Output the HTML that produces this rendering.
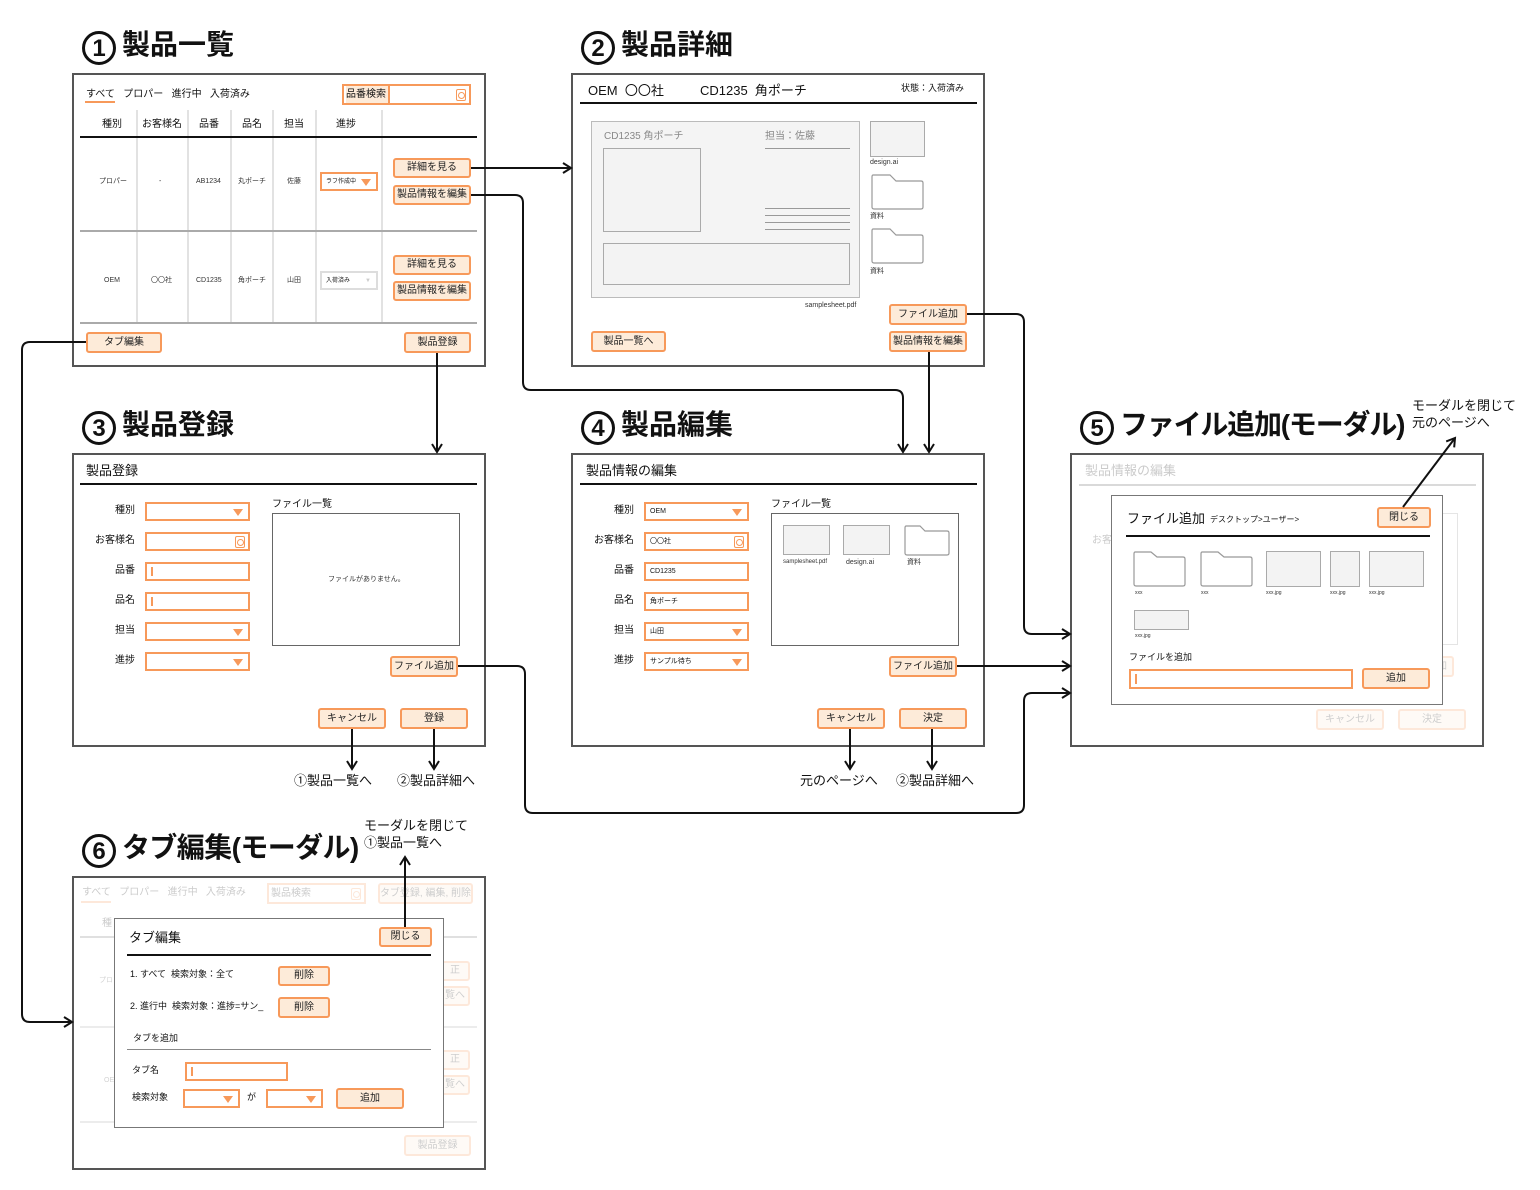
<!DOCTYPE html>
<html><head><meta charset="utf-8">
<style>
*{margin:0;padding:0;box-sizing:border-box}
body{width:1540px;height:1190px;background:#fff;position:relative;overflow:hidden;font-family:"Liberation Sans","Noto Sans CJK JP",sans-serif;color:#111}
.a{position:absolute}
.t{position:absolute;line-height:1;white-space:nowrap}
.f{position:absolute;border:2px solid #555;background:#fff}
.b{position:absolute;border:2px solid #f7995a;background:#fdebd9;border-radius:3px;display:flex;align-items:center;justify-content:center;font-size:10px;line-height:1;white-space:nowrap;color:#222}
.i{position:absolute;border:2px solid #f7995a;background:#fff;font-size:7px;line-height:1;display:flex;align-items:center;padding-left:4px}
.dd::after{content:"";position:absolute;right:5px;top:50%;margin-top:-3px;border-left:5px solid transparent;border-right:5px solid transparent;border-top:7px solid #f7995a}
.cur::before{content:"";position:absolute;left:4px;top:3px;width:2px;bottom:3px;background:#f7995a}
.hl{position:absolute;height:2px;background:#111}
.gl{position:absolute;height:2px;background:#aaa}
.vl{position:absolute;width:2px;background:#e2e2e2}
.h1{position:absolute;font-weight:bold;font-size:28px;line-height:1;white-space:nowrap}
.c{display:inline-block;width:34px;height:34px;border:3px solid #111;border-radius:50%;text-align:center;font-size:24px;line-height:29px;vertical-align:top;margin-right:6px}
.th{position:absolute;background:#f3f3f3;border:1.5px solid #aaa}
.sm{position:absolute;font-size:7px;line-height:1;white-space:nowrap;color:#333}
.lb{position:absolute;font-size:10px;line-height:1;white-space:nowrap;text-align:right;width:60px}
.fade{opacity:.22}
.mg{position:absolute;right:3px;top:50%;margin-top:-6px;width:10px;height:12px;border:1.5px solid #f7995a;border-radius:2px}
.mg::after{content:"";position:absolute;left:1px;top:2px;width:5px;height:5px;border:1.5px solid #f7995a;border-radius:50%}
</style></head><body>

<!-- Titles -->
<div class="h1" style="left:82px;top:31px"><span class="c">1</span>製品一覧</div>
<div class="h1" style="left:581px;top:31px"><span class="c">2</span>製品詳細</div>
<div class="h1" style="left:82px;top:411px"><span class="c">3</span>製品登録</div>
<div class="h1" style="left:581px;top:411px"><span class="c">4</span>製品編集</div>
<div class="h1" style="left:1080px;top:411px;letter-spacing:-1.2px"><span class="c" style="letter-spacing:0">5</span>ファイル追加(モーダル)</div>
<div class="h1" style="left:82px;top:834px;letter-spacing:-0.6px"><span class="c" style="letter-spacing:0">6</span>タブ編集(モーダル)</div>
<div class="t" style="left:1412px;top:397px;font-size:13px;line-height:17px">モーダルを閉じて<br>元のページへ</div>
<div class="t" style="left:364px;top:817px;font-size:13px;line-height:17px">モーダルを閉じて<br>①製品一覧へ</div>
<div class="t" style="left:294px;top:774px;font-size:13px">①製品一覧へ</div>
<div class="t" style="left:397px;top:774px;font-size:13px">②製品詳細へ</div>
<div class="t" style="left:800px;top:774px;font-size:13px">元のページへ</div>
<div class="t" style="left:896px;top:774px;font-size:13px">②製品詳細へ</div>

<!-- Screen 1 -->
<div class="f" style="left:72px;top:73px;width:414px;height:294px"></div>
<div class="t" style="left:86px;top:90px;font-size:10px">すべて&nbsp;&nbsp;&nbsp;プロパー&nbsp;&nbsp;&nbsp;進行中&nbsp;&nbsp;&nbsp;入荷済み</div>
<div class="a" style="left:85px;top:101px;width:30px;height:2px;background:#f7995a"></div>
<div class="i" style="left:342px;top:84px;width:129px;height:21px;padding-left:2px;font-size:10px"><span style="border-right:2px solid #f7995a;padding-right:2px;height:100%;display:flex;align-items:center;background:#fdebd9">品番検索</span><div class="mg"></div></div>
<div class="vl" style="left:136px;top:110px;height:212px"></div>
<div class="vl" style="left:187px;top:110px;height:212px"></div>
<div class="vl" style="left:230px;top:110px;height:212px"></div>
<div class="vl" style="left:272px;top:110px;height:212px"></div>
<div class="vl" style="left:315px;top:110px;height:212px"></div>
<div class="vl" style="left:381px;top:110px;height:212px"></div>
<div class="t" style="left:102px;top:120px;font-size:10px">種別</div>
<div class="t" style="left:142px;top:120px;font-size:10px">お客様名</div>
<div class="t" style="left:199px;top:120px;font-size:10px">品番</div>
<div class="t" style="left:242px;top:120px;font-size:10px">品名</div>
<div class="t" style="left:284px;top:120px;font-size:10px">担当</div>
<div class="t" style="left:336px;top:120px;font-size:10px">進捗</div>
<div class="hl" style="left:80px;top:136px;width:397px"></div>
<div class="gl" style="left:80px;top:230px;width:397px"></div>
<div class="gl" style="left:80px;top:322px;width:397px"></div>
<div class="sm" style="left:99px;top:178px">プロパー</div>
<div class="sm" style="left:159px;top:178px">-</div>
<div class="sm" style="left:196px;top:178px">AB1234</div>
<div class="sm" style="left:238px;top:178px">丸ポーチ</div>
<div class="sm" style="left:287px;top:178px">佐藤</div>
<div class="i dd" style="left:320px;top:172px;width:58px;height:19px;font-size:6px">ラフ作成中</div>
<div class="b" style="left:393px;top:158px;width:78px;height:20px">詳細を見る</div>
<div class="b" style="left:393px;top:185px;width:78px;height:20px">製品情報を編集</div>
<div class="sm" style="left:104px;top:277px">OEM</div>
<div class="sm" style="left:151px;top:277px">〇〇社</div>
<div class="sm" style="left:196px;top:277px">CD1235</div>
<div class="sm" style="left:238px;top:277px">角ポーチ</div>
<div class="sm" style="left:287px;top:277px">山田</div>
<div class="i" style="left:320px;top:271px;width:58px;height:19px;font-size:6px;border-color:#ddd">入荷済み<span style="position:absolute;right:5px;color:#ccc">▼</span></div>
<div class="b" style="left:393px;top:255px;width:78px;height:20px">詳細を見る</div>
<div class="b" style="left:393px;top:281px;width:78px;height:20px">製品情報を編集</div>
<div class="b" style="left:86px;top:332px;width:76px;height:21px">タブ編集</div>
<div class="b" style="left:404px;top:332px;width:67px;height:21px">製品登録</div>

<!-- Screen 2 -->
<div class="f" style="left:571px;top:73px;width:414px;height:294px"></div>
<div class="t" style="left:588px;top:84px;font-size:13px">OEM&nbsp;&nbsp;〇〇社</div>
<div class="t" style="left:700px;top:84px;font-size:13px">CD1235&nbsp;&nbsp;角ポーチ</div>
<div class="t" style="left:901px;top:84px;font-size:9px">状態：入荷済み</div>
<div class="hl" style="left:580px;top:102px;width:397px"></div>
<div class="th" style="left:591px;top:121px;width:269px;height:177px;background:#f4f4f4;border-color:#bbb"></div>
<div class="t" style="left:604px;top:132px;font-size:10px;color:#888">CD1235 角ポーチ</div>
<div class="t" style="left:765px;top:132px;font-size:10px;color:#888">担当：佐藤</div>
<div class="a" style="left:765px;top:148px;width:85px;height:1px;background:#999"></div>
<div class="a" style="left:765px;top:208px;width:85px;height:1px;background:#999"></div>
<div class="a" style="left:765px;top:215px;width:85px;height:1px;background:#999"></div>
<div class="a" style="left:765px;top:222px;width:85px;height:1px;background:#999"></div>
<div class="a" style="left:765px;top:229px;width:85px;height:1px;background:#999"></div>
<div class="th" style="left:603px;top:148px;width:98px;height:84px"></div>
<div class="th" style="left:603px;top:243px;width:247px;height:42px"></div>
<div class="sm" style="left:805px;top:302px">samplesheet.pdf</div>
<div class="th" style="left:870px;top:121px;width:55px;height:36px"></div>
<div class="sm" style="left:870px;top:159px">design.ai</div>
<svg class="a" style="left:871px;top:174px" width="53" height="36"><path d="M2 1 H19 L25 7 H50 Q52 7 52 9 V33 Q52 35 50 35 H3 Q1 35 1 33 V3 Q1 1 2 1Z" fill="#fff" stroke="#999" stroke-width="1.2"/></svg>
<div class="sm" style="left:870px;top:213px">資料</div>
<svg class="a" style="left:871px;top:228px" width="53" height="36"><path d="M2 1 H19 L25 7 H50 Q52 7 52 9 V33 Q52 35 50 35 H3 Q1 35 1 33 V3 Q1 1 2 1Z" fill="#fff" stroke="#999" stroke-width="1.2"/></svg>
<div class="sm" style="left:870px;top:268px">資料</div>
<div class="b" style="left:889px;top:304px;width:78px;height:21px">ファイル追加</div>
<div class="b" style="left:889px;top:331px;width:78px;height:21px">製品情報を編集</div>
<div class="b" style="left:591px;top:331px;width:75px;height:21px">製品一覧へ</div>

<!-- Screen 3 -->
<div class="f" style="left:72px;top:453px;width:414px;height:294px"></div>
<div class="t" style="left:86px;top:464px;font-size:13px">製品登録</div>
<div class="hl" style="left:80px;top:483px;width:397px"></div>
<div class="lb" style="left:75px;top:506px">種別</div>
<div class="lb" style="left:75px;top:536px">お客様名</div>
<div class="lb" style="left:75px;top:566px">品番</div>
<div class="lb" style="left:75px;top:596px">品名</div>
<div class="lb" style="left:75px;top:626px">担当</div>
<div class="lb" style="left:75px;top:656px">進捗</div>
<div class="i dd" style="left:145px;top:502px;width:105px;height:19px"></div>
<div class="i" style="left:145px;top:532px;width:105px;height:19px"><div class="mg"></div></div>
<div class="i cur" style="left:145px;top:562px;width:105px;height:19px"></div>
<div class="i cur" style="left:145px;top:592px;width:105px;height:19px"></div>
<div class="i dd" style="left:145px;top:622px;width:105px;height:19px"></div>
<div class="i dd" style="left:145px;top:652px;width:105px;height:19px"></div>
<div class="t" style="left:272px;top:500px;font-size:10px">ファイル一覧</div>
<div class="a" style="left:272px;top:513px;width:188px;height:133px;border:1.5px solid #666"></div>
<div class="sm" style="left:328px;top:576px">ファイルがありません。</div>
<div class="b" style="left:390px;top:656px;width:68px;height:21px">ファイル追加</div>
<div class="b" style="left:318px;top:708px;width:68px;height:21px">キャンセル</div>
<div class="b" style="left:400px;top:708px;width:68px;height:21px">登録</div>

<!-- Screen 4 -->
<div class="f" style="left:571px;top:453px;width:414px;height:294px"></div>
<div class="t" style="left:586px;top:464px;font-size:13px">製品情報の編集</div>
<div class="hl" style="left:580px;top:483px;width:397px"></div>
<div class="lb" style="left:574px;top:506px">種別</div>
<div class="lb" style="left:574px;top:536px">お客様名</div>
<div class="lb" style="left:574px;top:566px">品番</div>
<div class="lb" style="left:574px;top:596px">品名</div>
<div class="lb" style="left:574px;top:626px">担当</div>
<div class="lb" style="left:574px;top:656px">進捗</div>
<div class="i dd" style="left:644px;top:502px;width:105px;height:19px">OEM</div>
<div class="i" style="left:644px;top:532px;width:105px;height:19px">〇〇社<div class="mg"></div></div>
<div class="i" style="left:644px;top:562px;width:105px;height:19px">CD1235</div>
<div class="i" style="left:644px;top:592px;width:105px;height:19px">角ポーチ</div>
<div class="i dd" style="left:644px;top:622px;width:105px;height:19px">山田</div>
<div class="i dd" style="left:644px;top:652px;width:105px;height:19px">サンプル待ち</div>
<div class="t" style="left:771px;top:500px;font-size:10px">ファイル一覧</div>
<div class="a" style="left:771px;top:513px;width:188px;height:133px;border:1.5px solid #666"></div>
<div class="th" style="left:783px;top:525px;width:47px;height:30px"></div>
<div class="th" style="left:843px;top:525px;width:47px;height:30px"></div>
<svg class="a" style="left:904px;top:525px" width="46" height="31"><path d="M2 1 H16 L21 6 H43 Q45 6 45 8 V28 Q45 30 43 30 H3 Q1 30 1 28 V3 Q1 1 2 1Z" fill="#fff" stroke="#999" stroke-width="1.2"/></svg>
<div class="sm" style="left:783px;top:559px;font-size:6px">samplesheet.pdf</div>
<div class="sm" style="left:846px;top:559px">design.ai</div>
<div class="sm" style="left:907px;top:559px">資料</div>
<div class="b" style="left:889px;top:656px;width:68px;height:21px">ファイル追加</div>
<div class="b" style="left:817px;top:708px;width:68px;height:21px">キャンセル</div>
<div class="b" style="left:899px;top:708px;width:68px;height:21px">決定</div>

<!-- Screen 5 -->
<div class="f" style="left:1070px;top:453px;width:414px;height:294px"></div>
<div class="fade">
<div class="t" style="left:1085px;top:464px;font-size:13px">製品情報の編集</div>
<div class="hl" style="left:1079px;top:484px;width:397px;background:#555"></div>
<div class="t" style="left:1092px;top:536px;font-size:10px">お客様名</div>
<div class="a" style="left:1440px;top:513px;width:18px;height:132px;border:1.5px solid #888"></div>
<div class="b" style="left:1430px;top:656px;width:24px;height:21px">加</div>
<div class="b" style="left:1316px;top:709px;width:68px;height:21px">キャンセル</div>
<div class="b" style="left:1398px;top:709px;width:68px;height:21px">決定</div>
</div>
<div class="a" style="left:1111px;top:495px;width:332px;height:210px;border:1.5px solid #777;background:#fff"></div>
<div class="t" style="left:1127px;top:512px;font-size:13px">ファイル追加</div>
<div class="t" style="left:1210px;top:516px;font-size:8px">デスクトップ&gt;ユーザー&gt;</div>
<div class="b" style="left:1377px;top:507px;width:54px;height:21px">閉じる</div>
<div class="hl" style="left:1126px;top:535px;width:304px"></div>
<svg class="a" style="left:1133px;top:551px" width="54" height="36"><path d="M2 1 H18 L24 6 H50 Q52 6 52 8 V33 Q52 35 50 35 H3 Q1 35 1 33 V3 Q1 1 2 1Z" fill="#fff" stroke="#999" stroke-width="1.2"/></svg>
<svg class="a" style="left:1200px;top:551px" width="54" height="36"><path d="M2 1 H18 L24 6 H50 Q52 6 52 8 V33 Q52 35 50 35 H3 Q1 35 1 33 V3 Q1 1 2 1Z" fill="#fff" stroke="#999" stroke-width="1.2"/></svg>
<div class="th" style="left:1266px;top:551px;width:55px;height:36px"></div>
<div class="th" style="left:1330px;top:551px;width:30px;height:36px"></div>
<div class="th" style="left:1369px;top:551px;width:55px;height:36px"></div>
<div class="th" style="left:1134px;top:610px;width:55px;height:20px"></div>
<div class="sm" style="left:1135px;top:591px;font-size:5px">xxx</div>
<div class="sm" style="left:1201px;top:591px;font-size:5px">xxx</div>
<div class="sm" style="left:1266px;top:591px;font-size:5px">xxx.jpg</div>
<div class="sm" style="left:1330px;top:591px;font-size:5px">xxx.jpg</div>
<div class="sm" style="left:1369px;top:591px;font-size:5px">xxx.jpg</div>
<div class="sm" style="left:1135px;top:634px;font-size:5px">xxx.jpg</div>
<div class="t" style="left:1129px;top:653px;font-size:9px">ファイルを追加</div>
<div class="i cur" style="left:1129px;top:669px;width:224px;height:20px"></div>
<div class="b" style="left:1362px;top:668px;width:68px;height:21px">追加</div>

<!-- Screen 6 -->
<div class="f" style="left:72px;top:876px;width:414px;height:294px"></div>
<div class="fade">
<div class="t" style="left:82px;top:888px;font-size:10px">すべて&nbsp;&nbsp;&nbsp;プロパー&nbsp;&nbsp;&nbsp;進行中&nbsp;&nbsp;&nbsp;入荷済み</div>
<div class="a" style="left:81px;top:901px;width:30px;height:2px;background:#f7995a"></div>
<div class="i" style="left:267px;top:883px;width:99px;height:21px;font-size:10px;padding-left:2px">製品検索<div class="mg"></div></div>
<div class="b" style="left:378px;top:883px;width:95px;height:21px">タブ登録, 編集, 削除</div>
<div class="t" style="left:102px;top:919px;font-size:10px">種</div>
<div class="hl" style="left:80px;top:936px;width:397px;background:#777"></div>
<div class="gl" style="left:80px;top:1026px;width:397px"></div>
<div class="gl" style="left:80px;top:1121px;width:397px"></div>
<div class="sm" style="left:99px;top:977px">プロ</div>
<div class="sm" style="left:104px;top:1077px">OE</div>
<div class="b" style="left:440px;top:961px;width:30px;height:20px">正</div>
<div class="b" style="left:440px;top:986px;width:30px;height:20px">覧へ</div>
<div class="b" style="left:440px;top:1050px;width:30px;height:20px">正</div>
<div class="b" style="left:440px;top:1075px;width:30px;height:20px">覧へ</div>
<div class="b" style="left:404px;top:1135px;width:67px;height:21px">製品登録</div>
</div>
<div class="a" style="left:114px;top:918px;width:330px;height:210px;border:1.5px solid #777;background:#fff"></div>
<div class="t" style="left:129px;top:931px;font-size:13px">タブ編集</div>
<div class="b" style="left:379px;top:927px;width:53px;height:20px">閉じる</div>
<div class="hl" style="left:127px;top:954px;width:304px"></div>
<div class="t" style="left:130px;top:970px;font-size:9px">1. すべて&nbsp;&nbsp;検索対象：全て</div>
<div class="b" style="left:278px;top:966px;width:52px;height:20px">削除</div>
<div class="t" style="left:130px;top:1002px;font-size:9px">2. 進行中&nbsp;&nbsp;検索対象：進捗=サン_</div>
<div class="b" style="left:278px;top:997px;width:52px;height:21px">削除</div>
<div class="t" style="left:133px;top:1034px;font-size:9px">タブを追加</div>
<div class="a" style="left:127px;top:1049px;width:304px;height:1px;background:#888"></div>
<div class="t" style="left:132px;top:1066px;font-size:9px">タブ名</div>
<div class="i cur" style="left:185px;top:1062px;width:103px;height:19px"></div>
<div class="t" style="left:132px;top:1093px;font-size:9px">検索対象</div>
<div class="i dd" style="left:183px;top:1089px;width:57px;height:19px"></div>
<div class="t" style="left:247px;top:1093px;font-size:9px">が</div>
<div class="i dd" style="left:266px;top:1089px;width:57px;height:19px"></div>
<div class="b" style="left:336px;top:1088px;width:68px;height:21px">追加</div>

<svg class="a" style="left:0;top:0;pointer-events:none" width="1540" height="1190">
<defs><marker id="ar" markerWidth="12" markerHeight="12" refX="10" refY="6" orient="auto" markerUnits="userSpaceOnUse"><path d="M2 1 L10 6 L2 11" fill="none" stroke="#111" stroke-width="2"/></marker></defs>
<g fill="none" stroke="#111" stroke-width="2">
<path d="M471 168 H571" marker-end="url(#ar)"/>
<path d="M471 195 H515 Q523 195 523 203 V382 Q523 390 531 390 H895 Q903 390 903 398 V452" marker-end="url(#ar)"/>
<path d="M437 353 V452" marker-end="url(#ar)"/>
<path d="M86 342 H30 Q22 342 22 350 V1014 Q22 1022 30 1022 H72" marker-end="url(#ar)"/>
<path d="M929 352 V452" marker-end="url(#ar)"/>
<path d="M967 314 H1016 Q1024 314 1024 322 V626 Q1024 634 1032 634 H1070" marker-end="url(#ar)"/>
<path d="M458 666 H517 Q525 666 525 674 V805 Q525 813 533 813 H1016 Q1024 813 1024 805 V701 Q1024 693 1032 693 H1070" marker-end="url(#ar)"/>
<path d="M957 666 H1070" marker-end="url(#ar)"/>
<path d="M352 729 V769" marker-end="url(#ar)"/>
<path d="M434 729 V769" marker-end="url(#ar)"/>
<path d="M850 729 V769" marker-end="url(#ar)"/>
<path d="M932 729 V769" marker-end="url(#ar)"/>
<path d="M405 927 V857" marker-end="url(#ar)"/>
<path d="M1403 507 L1455 438" marker-end="url(#ar)"/>
</g></svg>

</body></html>
